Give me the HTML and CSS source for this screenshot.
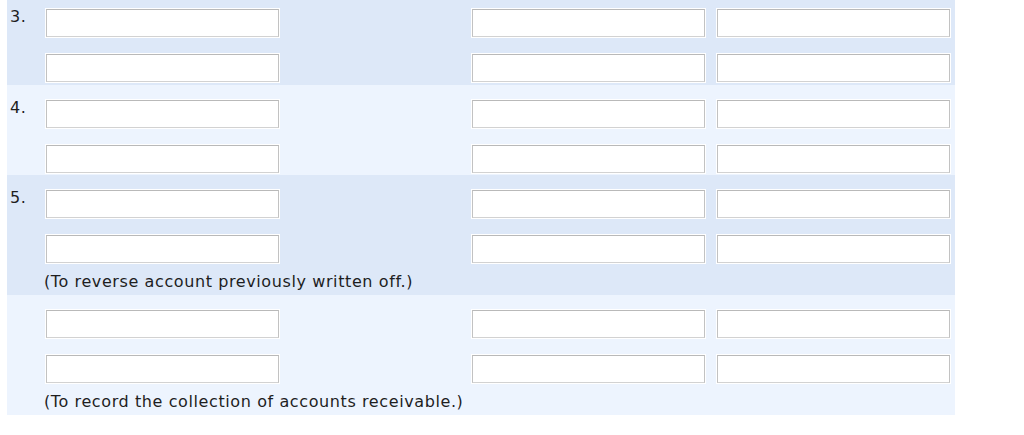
FILE: index.html
```html
<!DOCTYPE html>
<html>
<head>
<meta charset="utf-8">
<link rel="stylesheet" href="styles.css">
</head>
<body>
<div class="journal">
  <div class="entry dark first">
    <div class="line"><span class="num">3.</span><input class="field" type="text"><span></span><input class="field" type="text"><span></span><input class="field" type="text"></div>
    <div class="line"><span class="num"></span><input class="field" type="text"><span></span><input class="field" type="text"><span></span><input class="field" type="text"></div>
  </div>
  <div class="entry light">
    <div class="line"><span class="num">4.</span><input class="field" type="text"><span></span><input class="field" type="text"><span></span><input class="field" type="text"></div>
    <div class="line"><span class="num"></span><input class="field" type="text"><span></span><input class="field" type="text"><span></span><input class="field" type="text"></div>
  </div>
  <div class="entry dark">
    <div class="line"><span class="num">5.</span><input class="field" type="text"><span></span><input class="field" type="text"><span></span><input class="field" type="text"></div>
    <div class="line"><span class="num"></span><input class="field" type="text"><span></span><input class="field" type="text"><span></span><input class="field" type="text"></div>
    <div class="memo">(To reverse account previously written off.)</div>
  </div>
  <div class="entry light">
    <div class="line"><span class="num"></span><input class="field" type="text"><span></span><input class="field" type="text"><span></span><input class="field" type="text"></div>
    <div class="line"><span class="num"></span><input class="field" type="text"><span></span><input class="field" type="text"><span></span><input class="field" type="text"></div>
    <div class="memo">(To record the collection of accounts receivable.)</div>
  </div>
</div>
</body>
</html>
```

FILE: styles.css
```css
html, body {
  margin: 0;
  padding: 0;
  background: #ffffff;
}

body {
  font-family: "DejaVu Sans", Verdana, sans-serif;
  font-size: 16px;
  letter-spacing: 0.6px;
  color: #1e1e1e;
}

.journal {
  width: 948px;
  margin: -6px 0 0 7px;
}

.entry.dark {
  background: #dde8f8;
}

.entry.light {
  background: #edf4fe;
}

.entry.first {
  padding-bottom: 1px;
}

.line {
  display: grid;
  grid-template-columns: 39px 233px 193px 233px 12px 233px 5px;
  height: 45px;
  align-items: start;
}

.num {
  padding: 13px 0 0 3px;
  line-height: 19px;
}

.field {
  box-sizing: border-box;
  width: 233px;
  height: 28px;
  margin: 15px 0 0 0;
  padding: 0 4px;
  background: #ffffff;
  border: 1px solid;
  border-color: #b9b9b9 #c2c2c2 #d2d2d2 #c2c2c2;
  border-radius: 0;
  box-shadow: 0 0 0 1px #ffffff;
  font: inherit;
  outline: none;
}

.memo {
  height: 30px;
  box-sizing: border-box;
  padding: 7px 0 0 37px;
  line-height: 19px;
}
```
